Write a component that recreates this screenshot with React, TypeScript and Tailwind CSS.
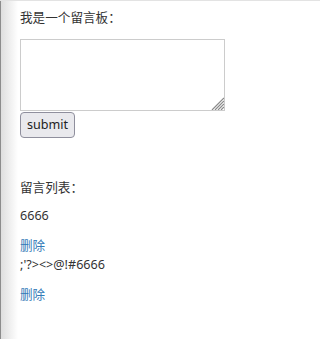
import React from "react";

// Message board: a textarea form plus the list of posted messages.

const messages = ["6666", ";'?><>@!#6666"];

/** Hatched resize grip drawn over the textarea's bottom-right corner */
function ResizeGrip() {
    return (
        <svg
            className="pointer-events-none absolute right-[1px] bottom-[1px]"
            width="14"
            height="14"
            viewBox="0 0 14 14"
        >
            <g stroke="#8a8a8a" strokeWidth="1.2">
                <line x1="14" y1="2" x2="2" y2="14" />
                <line x1="14" y1="5" x2="5" y2="14" />
                <line x1="14" y1="8" x2="8" y2="14" />
                <line x1="14" y1="11" x2="11" y2="14" />
            </g>
        </svg>
    );
}

export default function App() {
    return (
        <div
            className="flex min-h-[339px] border-t border-[#e3e3e3] bg-white text-[12.6px] leading-[18px] text-[#333333]"
            style={{ fontFamily: '"Noto Sans", "Noto Sans CJK SC", sans-serif' }}
        >
            <div className="w-[18px] shrink-0 border-l border-[#8c8c8c] bg-linear-to-r from-[#dedede] to-white" />
            <div className="flex flex-col pt-[8px] pl-[2px]">
                <p className="h-[18px]">我是一个留言板：</p>
                <div className="relative mt-[12px] w-[205px]">
                    <textarea className="block h-[72px] w-[205px] resize-none border border-[#cccccc] bg-white outline-none" />
                    <ResizeGrip />
                </div>
                <div className="mt-[1px]">
                    <button className="h-[26px] rounded-[4px] border border-[#8f8f9d] bg-[#e9e9ed] px-[6px] text-[12.6px] leading-[18px] text-[#222]">
                        submit
                    </button>
                </div>

                <p className="mt-[41px] h-[18px]">留言列表：</p>
                <div className="mt-[10px] flex flex-col">
                    {messages.map((m, i) => (
                        <div key={i} className={i === 0 ? "" : "mt-[1px]"}>
                            <p className="h-[18px]">{m}</p>
                            <a href="#" className="mt-[12px] block h-[18px] text-[#337ab7]">
                                删除
                            </a>
                        </div>
                    ))}
                </div>
            </div>
        </div>
    );
}
